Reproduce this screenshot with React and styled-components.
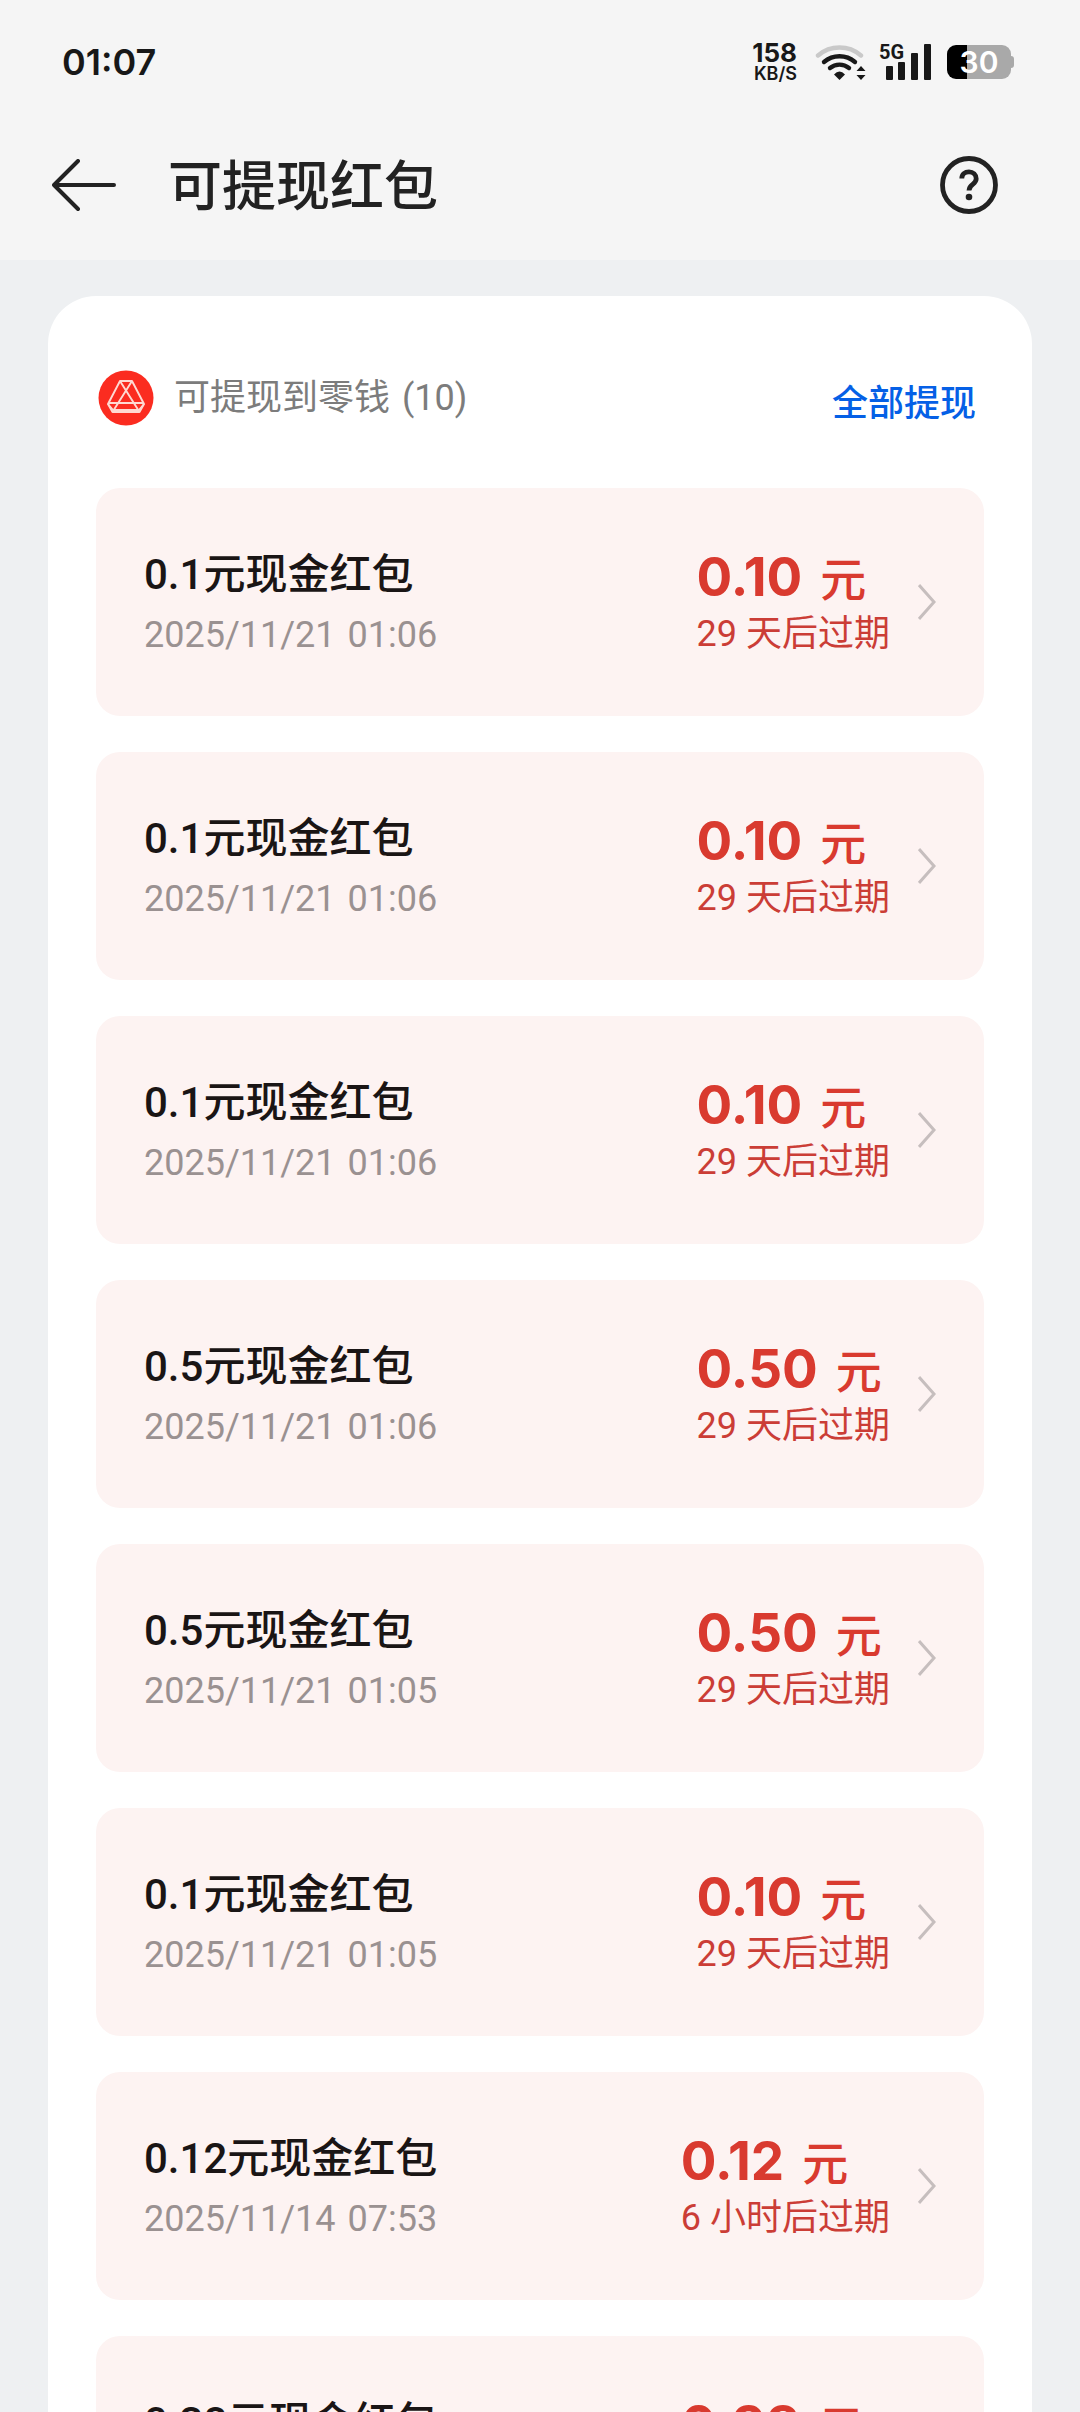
import React from "react";
import styled, { createGlobalStyle } from "styled-components";

const GlobalStyle = createGlobalStyle`
  *, *::before, *::after { box-sizing: border-box; }
  body {
    margin: 0;
    background: #eef0f2;
    font-family: Roboto, "Noto Sans CJK SC", sans-serif;
  }
  button { font: inherit; border: 0; padding: 0; background: none; color: inherit; }
`;

const numeric = `Inter, "Noto Sans CJK SC", sans-serif`;

const Screen = styled.div`
  height: 100vh;
  display: flex;
  flex-direction: column;
  overflow: hidden;
`;

const Top = styled.header`
  flex: none;
  background: #f5f5f5;
  color: #222;
  padding-bottom: 36px;
`;

const StatusBar = styled.div`
  display: flex;
  align-items: center;
  justify-content: space-between;
  height: 124px;
  padding: 0 66px 0 62px;
  color: #181818;
`;

const Clock = styled.time`
  font: 600 36px/44px ${numeric};
`;

const StatusIcons = styled.div`
  display: flex;
  align-items: center;
`;

const Speed = styled.div`
  display: grid;
  justify-items: end;
  margin-right: 18px;
  padding-top: 2px;
  font-family: ${numeric};
  font-weight: 700;
`;

const SpeedValue = styled.span`
  font-size: 26px;
  line-height: 22px;
`;

const SpeedUnit = styled.span`
  font-size: 18px;
  font-weight: 600;
  line-height: 20px;
`;

const Signal = styled.div`
  display: grid;
  margin: 0 16px 0 12px;
`;

const Network = styled.span`
  grid-area: 1 / 1;
  font-size: 20px;
  font-weight: 700;
  line-height: 16px;
`;

const Bars = styled.svg`
  grid-area: 1 / 1;
`;

const Battery = styled.div`
  display: flex;
  align-items: center;
`;

const BatteryBody = styled.div`
  width: 64px;
  height: 34px;
  border-radius: 9px;
  background: linear-gradient(90deg, #000 20px, #a9a9a9 20px);
  color: #fff;
  text-align: center;
  font: 600 30px/34px ${numeric};
`;

const BatteryTip = styled.div`
  width: 3px;
  height: 12px;
  border-radius: 0 3px 3px 0;
  background: #a9a9a9;
`;

const TitleBar = styled.div`
  display: flex;
  align-items: center;
  height: 100px;
  padding: 24px 82px 0 52px;
`;

const IconButton = styled.button`
  display: flex;
  flex: none;
`;

const PageTitle = styled.h1`
  flex: 1;
  margin: 0 0 0 52px;
  padding-top: 4px;
  font-size: 54px;
  font-weight: 500;
  line-height: 72px;
`;

const Content = styled.main`
  flex: 1;
  min-height: 0;
  overflow-y: auto;
  scrollbar-width: none;
  padding: 36px 48px;
`;

const Panel = styled.section`
  background: #fff;
  border-radius: 48px;
  padding: 72px 48px 48px;
`;

const PanelHead = styled.div`
  display: flex;
  align-items: center;
  justify-content: space-between;
  margin-bottom: 60px;
  padding: 0 8px 0 2px;
  height: 60px;
`;

const Account = styled.h2`
  display: flex;
  align-items: center;
  gap: 20px;
  margin: 0;
  color: #7c7c7c;
  font-size: 36px;
  font-weight: 400;
  line-height: 48px;
`;

const WithdrawAll = styled.button`
  && {
    padding-top: 12px;
    color: #0560e6;
    font-size: 36px;
    font-weight: 500;
    line-height: 48px;
  }
`;

const List = styled.ul`
  display: grid;
  gap: 36px;
  margin: 0;
  padding: 0;
  list-style: none;
`;

const Card = styled.button`
  display: flex;
  align-items: center;
  width: 100%;
  height: 228px;
  border-radius: 24px;
  && {
    background: #fdf3f2;
    padding: 0 48px;
  }
  text-align: left;
`;

const Info = styled.span`
  display: grid;
  flex: 1;
  gap: 8px;
  padding-top: 2px;
`;

const Name = styled.span`
  color: #1a1515;
  font-size: 42px;
  font-weight: 500;
  line-height: 56px;
`;

const Time = styled.time`
  color: #9a9191;
  font-size: 36px;
  line-height: 48px;
`;

const Value = styled.span`
  display: grid;
  margin-right: 28px;
`;

const Amount = styled.span`
  display: flex;
  align-items: baseline;
  gap: 18px;
  color: #d93a2f;
  font: 700 53px/62px ${numeric};
`;

const Unit = styled.span`
  font-size: 46px;
  font-weight: 500;
`;

const Expiry = styled.span`
  color: #cb3d36;
  font-size: 36px;
  line-height: 48px;
`;

const Tail = styled.span`
  margin-left: 3px;
`;

const packets = [
  ["0.1", "0.10", "2025/11/21 01:06", "29 天后过期"],
  ["0.1", "0.10", "2025/11/21 01:06", "29 天后过期"],
  ["0.1", "0.10", "2025/11/21 01:06", "29 天后过期"],
  ["0.5", "0.50", "2025/11/21 01:06", "29 天后过期"],
  ["0.5", "0.50", "2025/11/21 01:05", "29 天后过期"],
  ["0.1", "0.10", "2025/11/21 01:05", "29 天后过期"],
  ["0.12", "0.12", "2025/11/14 07:53", "6 小时后过期"],
  ["0.38", "0.38", "2025/11/14 07:53", "6 小时后过期"],
];

const Spaced = ({ text }) => {
  const [head, tail] = text.split(" ");
  return (
    <span>
      {head} <Tail>{tail}</Tail>
    </span>
  );
};

const WifiIcon = () => (
  <svg width="52" height="38" viewBox="0 0 52 38" fill="none" strokeLinecap="round" strokeWidth="4.4" aria-hidden="true">
    <path d="M3 12.500A33 33 0 0 1 46 12.500" stroke="#c9c9c9" />
    <path d="M9 19A24 24 0 0 1 40 19" stroke="#181818" />
    <path d="M15 25A15 15 0 0 1 34 25" stroke="#181818" />
    <path d="M24.500 37l-5.500-5.500q5.500-6 11 0z" fill="#181818" />
    <path d="M46 23l4.500 5h-9zM46 37l4.500-5h-9z" fill="#181818" />
  </svg>
);

const BackIcon = () => (
  <svg width="64" height="54" viewBox="0 0 64 54" fill="none" stroke="currentColor" strokeWidth="4" strokeLinecap="round" strokeLinejoin="round" aria-hidden="true">
    <path d="M26 2L2 26l24 24M2 26h60" />
  </svg>
);

const HelpIcon = () => (
  <svg width="58" height="60" viewBox="0 0 58 60" fill="none" stroke="currentColor" strokeWidth="4.800" aria-hidden="true">
    <circle cx="29" cy="29" r="26.500" />
    <path d="M21.800 22.500C21.800 18 25 15.800 29 15.800s7.200 3 7.200 7c0 5.800-7.200 5.400-7.200 11.700" />
    <circle cx="29" cy="41" r="3.300" fill="currentColor" stroke="none" />
  </svg>
);

const WalletLogo = () => (
  <svg width="56" height="56" viewBox="0 0 56 56" fill="none" stroke="#ffd9d2" strokeWidth="1.900" strokeLinejoin="round" aria-hidden="true">
    <circle cx="28" cy="28" r="27.500" fill="#fb2c20" stroke="none" />
    <path d="M22 11h12L46 34l-4.500 8h-27L10 34z" />
    <path d="M22 11l19.500 31M34 11L14.500 42M10 33h36M10 34l5 6h26l5-6" />
  </svg>
);

const Chevron = () => (
  <svg width="18" height="36" viewBox="0 0 18 36" fill="none" stroke="#c6bebe" strokeWidth="3" aria-hidden="true">
    <path d="M1 1l15 17L1 35" />
  </svg>
);

export default function App() {
  return (
    <Screen>
      <GlobalStyle />
      <Top>
        <StatusBar>
          <Clock>01:07</Clock>
          <StatusIcons>
            <Speed>
              <SpeedValue>158</SpeedValue>
              <SpeedUnit>KB/S</SpeedUnit>
            </Speed>
            <WifiIcon />
            <Signal>
              <Network>5G</Network>
              <Bars width="52" height="36" viewBox="0 0 52 36" fill="#181818" aria-hidden="true">
                <rect x="7" y="22" width="7" height="14" rx="1" />
                <rect x="19" y="18" width="7" height="18" rx="1" />
                <rect x="32" y="9" width="7" height="27" rx="1" />
                <rect x="45" y="0" width="7" height="36" rx="1" />
              </Bars>
            </Signal>
            <Battery>
              <BatteryBody>30</BatteryBody>
              <BatteryTip />
            </Battery>
          </StatusIcons>
        </StatusBar>
        <TitleBar>
          <IconButton type="button" aria-label="返回"><BackIcon /></IconButton>
          <PageTitle>可提现红包</PageTitle>
          <IconButton type="button" aria-label="帮助"><HelpIcon /></IconButton>
        </TitleBar>
      </Top>
      <Content>
        <Panel>
          <PanelHead>
            <Account>
              <WalletLogo />
              <Spaced text="可提现到零钱 (10)" />
            </Account>
            <WithdrawAll type="button">全部提现</WithdrawAll>
          </PanelHead>
          <List>
            {packets.map(([label, amount, time, expiry], i) => (
              <li key={i}>
                <Card type="button">
                  <Info>
                    <Name>{label}元现金红包</Name>
                    <Time><Spaced text={time} /></Time>
                  </Info>
                  <Value>
                    <Amount>{amount}<Unit>元</Unit></Amount>
                    <Expiry>{expiry}</Expiry>
                  </Value>
                  <Chevron />
                </Card>
              </li>
            ))}
          </List>
        </Panel>
      </Content>
    </Screen>
  );
}
